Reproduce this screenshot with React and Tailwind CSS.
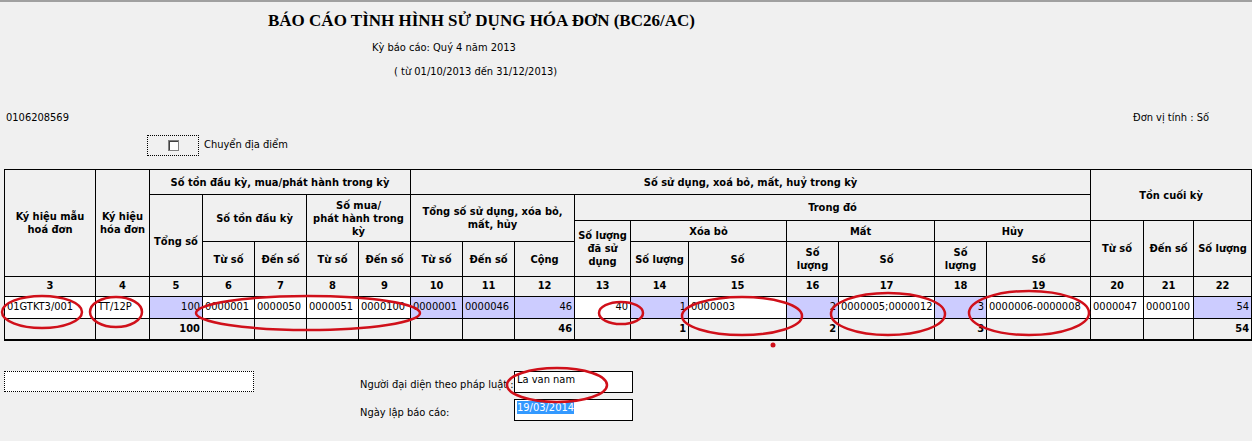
export default function App() {
  const f = { fontFamily: 'Tahoma, "DejaVu Sans Condensed", "Liberation Sans", sans-serif' };
  const widths = [91, 54, 53, 52, 52, 52, 52, 52, 52, 60, 56, 58, 98, 52, 96, 52, 104, 53, 50, 58];
  const th = "border border-black font-bold text-center align-middle leading-[13px] px-0";
  const L = "bg-[#ccccff]";
  const W = "bg-white";
  const data = [
    ["01GTKT3/001", W, "l"], ["TT/12P", W, "l"], ["100", L, "r"], ["0000001", W, "l"], ["0000050", W, "l"],
    ["0000051", W, "l"], ["0000100", W, "l"], ["0000001", L, "l"], ["0000046", L, "l"], ["46", L, "r"],
    ["40", W, "r"], ["1", L, "r"], ["0000003", W, "l"], ["2", L, "r"], ["0000005;0000012", W, "l"],
    ["3", L, "r"], ["0000006-0000008", W, "l"], ["0000047", W, "l"], ["0000100", W, "l"], ["54", L, "r"],
  ];
  const totals = ["", "", "100", "", "", "", "", "", "", "46", "", "1", "", "2", "", "3", "", "", "", "54"];
  return (
    <div className="relative w-[1252px] h-[441px] overflow-hidden bg-[#f0f0f0] border-t-2 border-[#a0a0a0] text-[11px] text-black" style={f}>
      <div className="pl-[268px] pt-[9px] text-[17px] font-bold leading-[20px]" style={{ fontFamily: '"Liberation Serif", serif' }}>
        BÁO CÁO TÌNH HÌNH SỬ DỤNG HÓA ĐƠN (BC26/AC)
      </div>
      <div className="pl-[372px] pt-[10px] leading-[14px]">Kỳ báo cáo: Quý 4 năm 2013</div>
      <div className="pl-[394px] pt-[10px] leading-[14px]">( từ 01/10/2013 đến 31/12/2013)</div>
      <div className="flex justify-between pl-[6px] pr-[43px] pt-[32px] leading-[14px]">
        <span>0106208569</span>
        <span>Đơn vị tính : Số</span>
      </div>
      <div className="flex items-center pl-[147px] pt-[10px]">
        <div className="w-[52px] h-[21px] border border-dotted border-black flex items-center justify-center">
          <div className="w-[11px] h-[11px] bg-white border border-[#808080] shadow-[inset_1px_1px_0_#404040]" />
        </div>
        <span className="ml-[5px]">Chuyển địa điểm</span>
      </div>
      <table className="ml-[4px] mt-[13px] border-collapse table-fixed text-[11px]" style={{ width: 1247 }}>
        <colgroup>{widths.map((w, i) => <col key={i} style={{ width: w }} />)}</colgroup>
        <thead>
          <tr className="h-[25px]">
            <th rowSpan={4} className={th}>Ký hiệu mẫu<br />hoá đơn</th>
            <th rowSpan={4} className={th}>Ký hiệu<br />hóa đơn</th>
            <th colSpan={5} className={th}>Số tồn đầu kỳ, mua/phát hành trong kỳ</th>
            <th colSpan={10} className={th}>Số sử dụng, xoá bỏ, mất, huỷ trong kỳ</th>
            <th colSpan={3} rowSpan={2} className={th}>Tồn cuối kỳ</th>
          </tr>
          <tr className="h-[26px]">
            <th rowSpan={3} className={th + " pt-[12px]"}>Tổng số</th>
            <th colSpan={2} rowSpan={2} className={th}>Số tồn đầu kỳ</th>
            <th colSpan={2} rowSpan={2} className={th}>Số mua/<br />phát hành trong<br />kỳ</th>
            <th colSpan={3} rowSpan={2} className={th}>Tổng số sử dụng, xóa bỏ,<br />mất, hủy</th>
            <th colSpan={7} className={th}>Trong đó</th>
          </tr>
          <tr className="h-[21px]">
            <th rowSpan={2} className={th}>Số lượng<br />đã sử<br />dụng</th>
            <th colSpan={2} className={th}>Xóa bỏ</th>
            <th colSpan={2} className={th}>Mất</th>
            <th colSpan={2} className={th}>Hủy</th>
            <th rowSpan={2} className={th}>Từ số</th>
            <th rowSpan={2} className={th}>Đến số</th>
            <th rowSpan={2} className={th}>Số lượng</th>
          </tr>
          <tr className="h-[35px]">
            {["Từ số", "Đến số", "Từ số", "Đến số", "Từ số", "Đến số", "Cộng"].map((t, i) => (
              <th key={i} className={th}>{t}</th>
            ))}
            <th className={th}>Số lượng</th>
            <th className={th}>Số</th>
            <th className={th}>Số<br />lượng</th>
            <th className={th}>Số</th>
            <th className={th}>Số<br />lượng</th>
            <th className={th}>Số</th>
          </tr>
        </thead>
        <tbody>
          <tr className="h-[20px]">
            {widths.map((_, i) => (
              <td key={i} className="border-x border-black border-t text-center font-bold">{i + 3}</td>
            ))}
          </tr>
          <tr className="h-[22px]">
            {data.map(([t, bg, a], i) => (
              <td key={i} className={`border border-black ${bg} px-[2px] whitespace-nowrap overflow-hidden ${a === "r" ? "text-right" : "text-left"}`}>{t}</td>
            ))}
          </tr>
          <tr className="h-[21px]">
            {totals.map((t, i) => (
              <td key={i} className="border-x border-black border-b-2 text-right font-bold px-[2px]">{t}</td>
            ))}
          </tr>
        </tbody>
      </table>
      <div className="flex pl-[4px] pt-[30px]">
        <div className="w-[250px] h-[21px] bg-white border border-dotted border-black" />
        <div className="ml-[106px] flex flex-col gap-[6px]">
          <div className="flex items-center">
            <span className="w-[154px] pt-[6px]">Người đại diện theo pháp luật :</span>
            <div className="w-[119px] h-[22px] bg-white border border-black px-[2px] leading-[16px]">La van nam</div>
          </div>
          <div className="flex items-center">
            <span className="w-[154px] pt-[6px]">Ngày lập báo cáo:</span>
            <div className="w-[119px] h-[22px] bg-white border border-black px-[2px] leading-[16px]">
              <span className="bg-[#3399ff] text-white">19/03/2014</span>
            </div>
          </div>
        </div>
      </div>
      <svg className="absolute left-0 top-0 pointer-events-none" width="1252" height="441">
        <g fill="none" stroke="#d0101a" strokeWidth="2.5">
          <ellipse cx="42" cy="310" rx="40" ry="16" />
          <ellipse cx="116" cy="310" rx="26" ry="15" />
          <ellipse cx="308" cy="311" rx="112" ry="17" />
          <ellipse cx="621" cy="311" rx="22" ry="11" />
          <ellipse cx="742" cy="314" rx="60" ry="19" />
          <ellipse cx="888" cy="312" rx="57" ry="21" />
          <ellipse cx="1029" cy="311" rx="60" ry="22" />
          <ellipse cx="557" cy="383" rx="50" ry="17" />
        </g>
        <circle cx="773" cy="343" r="2.5" fill="#d0101a" />
      </svg>
    </div>
  );
}
